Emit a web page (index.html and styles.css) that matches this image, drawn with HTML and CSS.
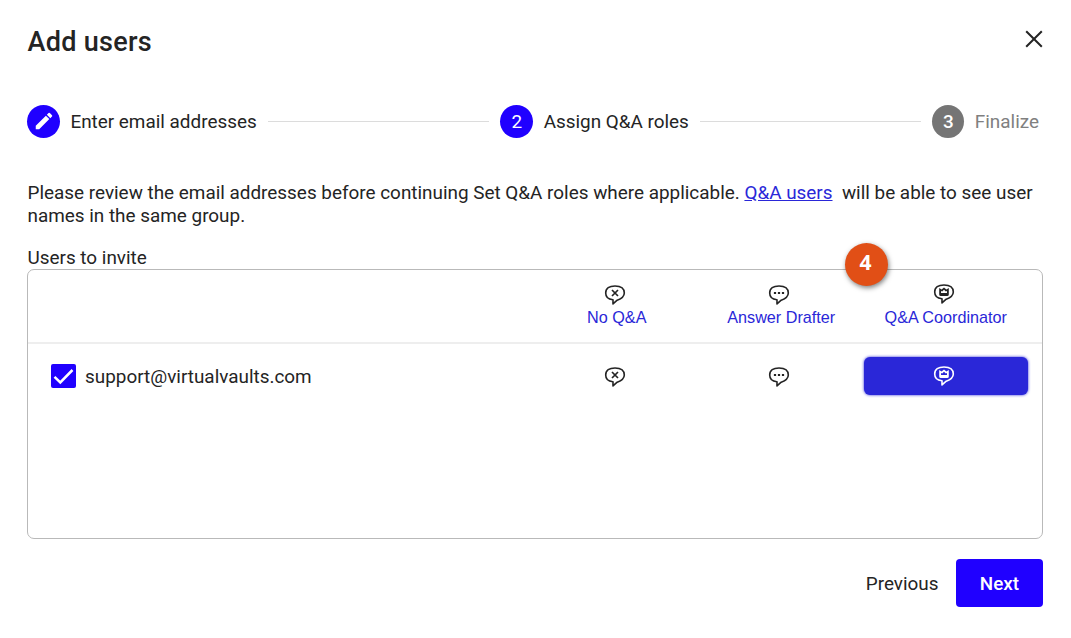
FILE: index.html
```html
<!DOCTYPE html>
<html lang="en">
  <head>
    <meta charset="utf-8">
    <title>Add users</title>
    <link rel="stylesheet" href="styles.css">
  </head>
  <body>
    <!-- Shared role icons -->
    <svg class="sprite" width="0" height="0">
      <symbol id="bubble" viewBox="0 0 22 22">
        <path d="M8.8 15.8C4.2 15.3 1.7 12.5 1.7 9C1.7 4.3 5.3 2 11 2S20.3 4.3 20.3 9C20.3 12.7 16.5 15 13.2 16.2L9 19.9V15.8Z" fill="none" stroke="currentColor" stroke-width="1.6" stroke-linejoin="round"/>
      </symbol>
      <symbol id="none" viewBox="0 0 22 22">
        <use href="#bubble"/>
        <path d="M8 6L14 12M14 6L8 12" fill="none" stroke="currentColor" stroke-width="1.7"/>
      </symbol>
      <symbol id="drafter" viewBox="0 0 22 22">
        <use href="#bubble"/>
        <path d="M5.9 8h2.2v2H5.9zM9.9 8h2.2v2H9.9zM13.9 8h2.2v2h-2.2z" fill="currentColor"/>
      </symbol>
      <symbol id="coordinator" viewBox="0 0 22 22">
        <use href="#bubble"/>
        <path d="M6.2 5L8.6 6.4L11 4.4L13.4 6.4L15.8 5V11.4Q15.8 13 14.2 13H7.8Q6.2 13 6.2 11.4ZM8 8V10H14V8L12.8 8.6L11 6.8L9.2 8.6Z" fill="currentColor" fill-rule="evenodd"/>
      </symbol>
    </svg>

    <div class="dialog">
      <header>
        <h1>Add users</h1>
        <button class="close" aria-label="Close">
          <svg width="18" height="18" viewBox="0 0 18 18"><path d="M1.2 1.2L16.8 16.8M16.8 1.2L1.2 16.8" fill="none" stroke="currentColor" stroke-width="2"/></svg>
        </button>
      </header>

      <div class="steps">
        <div class="step">
          <span class="circle">
            <svg class="pencil" width="22" height="22" viewBox="0 0 24 24"><path d="M3 17.25V21h3.75L17.81 9.94l-3.75-3.75L3 17.25zM20.71 7.04a1 1 0 0 0 0-1.41l-2.34-2.34a1 1 0 0 0-1.41 0l-1.83 1.83 3.75 3.75 1.83-1.83z" fill="currentColor"/></svg>
          </span>
          Enter email addresses
        </div>
        <div class="line"></div>
        <div class="step"><span class="circle">2</span>Assign Q&amp;A roles</div>
        <div class="line"></div>
        <div class="step disabled"><span class="circle">3</span>Finalize</div>
      </div>

      <p class="intro">Please review the email addresses before continuing Set Q&amp;A roles where applicable. <a href="#">Q&amp;A users</a>&nbsp; will be able to see user names in the same group.</p>

      <div class="label">Users to invite</div>
      <div class="users">
        <div class="row head">
          <div></div>
          <div class="role"><svg class="icon"><use href="#none"/></svg><span>No Q&amp;A</span></div>
          <div class="role"><svg class="icon"><use href="#drafter"/></svg><span>Answer Drafter</span></div>
          <div class="role"><svg class="icon raised"><use href="#coordinator"/></svg><span>Q&amp;A Coordinator</span></div>
        </div>
        <div class="row">
          <div class="user">
            <span class="checkbox">
              <svg width="25" height="24" viewBox="0 0 25 24"><path d="M3.5 12.8L9.3 18.4L21.5 6" fill="none" stroke="currentColor" stroke-width="2.5"/></svg>
            </span>
            <span class="email">support@virtualvaults.com</span>
          </div>
          <div class="choice"><svg class="icon"><use href="#none"/></svg></div>
          <div class="choice"><svg class="icon"><use href="#drafter"/></svg></div>
          <div class="choice selected"><svg class="icon"><use href="#coordinator"/></svg></div>
        </div>
        <div class="marker">4</div>
      </div>

      <footer>
        <button class="previous">Previous</button>
        <button class="next">Next</button>
      </footer>
    </div>
  </body>
</html>
```

FILE: styles.css
```css
* {
    box-sizing: border-box;
}
body {
    margin: 0;
    background: #fff;
    color: #242424;
    font-family: Roboto, sans-serif;
    font-size: 18.9px;
    line-height: 23px;
}
button {
    border: 0;
    background: none;
    padding: 0;
    color: inherit;
    font: inherit;
}
.sprite {
    display: block;
}
.dialog {
    padding: 24px 28px 0 27px;
}

header {
    display: flex;
    justify-content: space-between;
    height: 81px;
}
h1 {
    margin: 0;
    padding-left: 0.5px;
    font-size: 27px;
    font-weight: 500;
    line-height: 36px;
    letter-spacing: 0.3px;
}
.close {
    width: 18px;
    height: 30px;
}
.close svg {
    display: block;
}

.steps {
    display: flex;
    align-items: center;
    gap: 11px;
    padding-right: 4px;
    height: 33px;
}
.step {
    display: flex;
    align-items: center;
    gap: 10.4px;
    white-space: nowrap;
}
.circle {
    display: flex;
    align-items: center;
    justify-content: center;
    width: 33px;
    height: 33px;
    border-radius: 50%;
    background: #2000ff;
    color: #fff;
}
.pencil {
    margin-bottom: 2px;
}
.disabled {
    color: #808080;
}
.disabled .circle {
    width: 32px;
    background: #757575;
    font-weight: 500;
}
.line {
    flex: 1;
    height: 1px;
    background: #dcdcdc;
}

.intro {
    margin: 43px 0 19px;
    padding-left: 0.5px;
}
.intro a {
    color: #2a27d8;
}
.label {
    height: 23px;
    padding-left: 0.5px;
}

.users {
    position: relative;
    height: 270px;
    border: 1px solid #b9b9b9;
    border-radius: 7px;
}
.row {
    display: grid;
    grid-template-columns: 1fr 164.5px 164.5px 164.5px;
    padding-right: 14px;
    padding-top: 13px;
}
.head {
    height: 74px;
    padding-top: 14px;
    border-bottom: 2px solid #eee;
}
.role {
    display: flex;
    flex-direction: column;
    align-items: center;
    color: #2a27d8;
    font-family: "Liberation Sans", Arial, sans-serif;
    font-size: 16.2px;
    line-height: 22px;
}
.icon {
    width: 22px;
    height: 22px;
    margin-right: 4px;
    color: #242424;
}
.choice .icon {
    margin-top: 2px;
}
.raised {
    margin-top: -1px;
    margin-bottom: 1px;
}
.user {
    display: flex;
    align-items: center;
    padding-left: 23px;
}
.checkbox {
    width: 25px;
    height: 24px;
    margin-right: 9px;
    border-radius: 2px;
    background: #2000ff;
    color: #fff;
}
.checkbox svg {
    display: block;
}
.choice {
    display: flex;
    align-items: center;
    justify-content: center;
    height: 38px;
    border-radius: 6px;
}
.selected {
    background: #2a27d8;
    box-shadow: 0 0 3px #2a27d8;
}
.selected .icon {
    margin-top: 0;
    color: #fff;
}
.marker {
    position: absolute;
    top: -27px;
    left: 817px;
    width: 43px;
    height: 43px;
    padding-right: 2px;
    border-radius: 50%;
    background: #e14f16;
    box-shadow: 1px 2px 5px rgba(0, 0, 0, 0.5);
    color: #fff;
    font-family: "Noto Sans", sans-serif;
    font-size: 21px;
    font-weight: 700;
    line-height: 39px;
    text-align: center;
}

footer {
    display: flex;
    justify-content: flex-end;
    gap: 17.5px;
    margin-top: 20px;
}
.next {
    width: 87px;
    height: 48px;
    border-radius: 4px;
    background: #2000ff;
    color: #fff;
    font-weight: 500;
}
```
